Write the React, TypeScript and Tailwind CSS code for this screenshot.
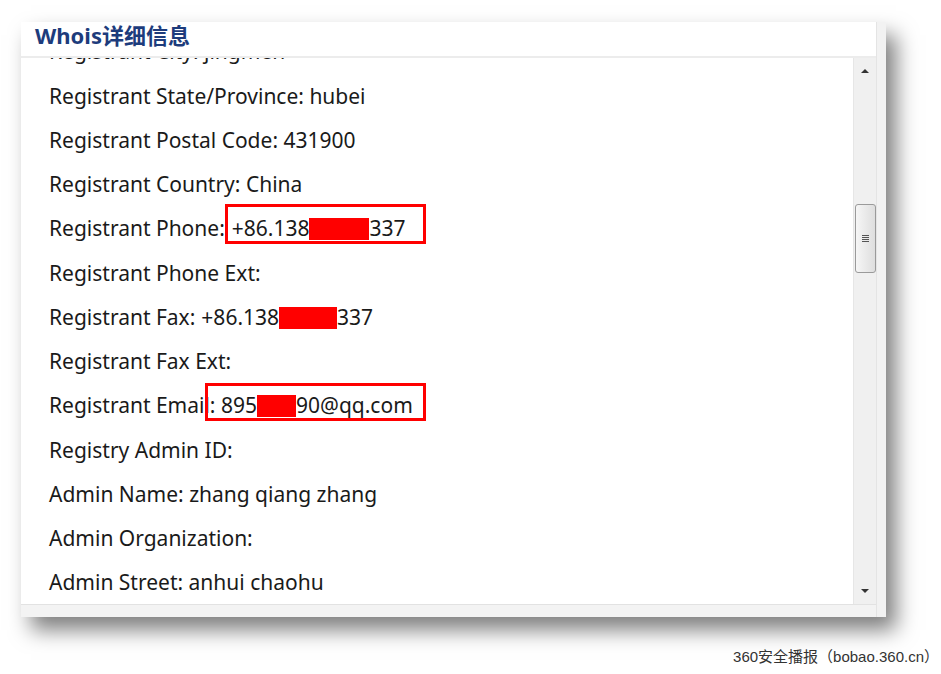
import React from "react";

type Row = { label: string; value?: React.ReactNode };

function Redact({ w }: { w: string }) {
  return <span className={`inline-block h-[22px] bg-[#ff0000] align-[-4px] ${w}`} />;
}

function App() {
  const rows: Row[] = [
    { label: "Registrant City: jingmen" },
    { label: "Registrant State/Province: hubei" },
    { label: "Registrant Postal Code: 431900" },
    { label: "Registrant Country: China" },
    {
      label: "Registrant Phone:",
      value: (
        <span className="relative ml-[7px] inline-block">
          +86.138
          <Redact w="w-[60px]" />
          337
          <span className="absolute left-[-7px] top-[-9px] h-[40px] w-[201px] border-[3px] border-[#ff0000]" />
        </span>
      ),
    },
    { label: "Registrant Phone Ext:" },
    {
      label: "Registrant Fax:",
      value: (
        <span className="ml-[6px]">
          +86.138
          <Redact w="w-[58px]" />
          337
        </span>
      ),
    },
    { label: "Registrant Fax Ext:" },
    {
      label: "Registrant Emai",
      value: (
        <span className="relative inline-block">
          l: 895
          <Redact w="w-[39px]" />
          90@qq.com
          <span className="absolute left-[1px] top-[-7px] h-[38px] w-[221px] border-[3px] border-[#ff0000]" />
        </span>
      ),
    },
    { label: "Registry Admin ID:" },
    { label: "Admin Name: zhang qiang zhang" },
    { label: "Admin Organization:" },
    { label: "Admin Street: anhui chaohu" },
  ];

  return (
    <div className="min-h-[674px] w-[941px] bg-white pl-[21px] pt-[22px] font-['Noto_Sans','Noto_Sans_CJK_SC',sans-serif]">
      <div className="flex h-[595px] w-[865px] bg-white shadow-[10px_13px_20px_rgba(0,0,0,0.5)]">
        <div className="flex flex-1 flex-col">
          <div className="flex h-[36px] items-center border-b-2 border-[#ececec] pb-[9px] pl-[14px]">
            <h2 className="text-[22px] leading-[28px] font-bold text-[#1d3c7c]">Whois详细信息</h2>
          </div>
          <div className="flex flex-1 overflow-hidden">
            <div className="flex-1 overflow-hidden">
              <div className="-mt-[28px] pl-[28px] text-[21px] text-[#1a1a1a]">
                {rows.map((row, i) => (
                  <div key={i} className="flex h-[44.25px] items-center whitespace-nowrap">
                    {row.label}
                    {row.value}
                  </div>
                ))}
              </div>
            </div>
            <div className="flex w-[23px] flex-col items-center border-l border-[#e6e6e6] bg-[#f0f0f0]">
              <div className="mt-[11px] h-0 w-0 border-x-[4px] border-b-[4px] border-x-transparent border-b-[#333]" />
              <div className="mt-[131px] flex h-[69px] w-[21px] items-center justify-center rounded-[3px] border border-[#9a9a9a] bg-[linear-gradient(90deg,#f6f6f6,#dedede)]">
                <div className="flex flex-col gap-[1px]">
                  <span className="block h-[1px] w-[7px] bg-[#555]" />
                  <span className="block h-[1px] w-[7px] bg-[#555]" />
                  <span className="block h-[1px] w-[7px] bg-[#555]" />
                  <span className="block h-[1px] w-[7px] bg-[#555]" />
                </div>
              </div>
              <div className="flex-1" />
              <div className="mb-[11px] h-0 w-0 border-x-[4px] border-t-[4px] border-x-transparent border-t-[#333]" />
            </div>
          </div>
          <div className="h-[13px] border-t border-[#e2e2e2] bg-[#f3f3f3]" />
        </div>
        <div className="w-[10px] border-l border-[#e4e4e4] bg-[#f2f2f2]" />
      </div>
      <div className="mt-[29px] w-[918px] text-right text-[15px] text-[#333] font-['Liberation_Sans','Noto_Sans_CJK_SC',sans-serif]">
        360安全播报（bobao.360.cn）
      </div>
    </div>
  );
}

export default App;
